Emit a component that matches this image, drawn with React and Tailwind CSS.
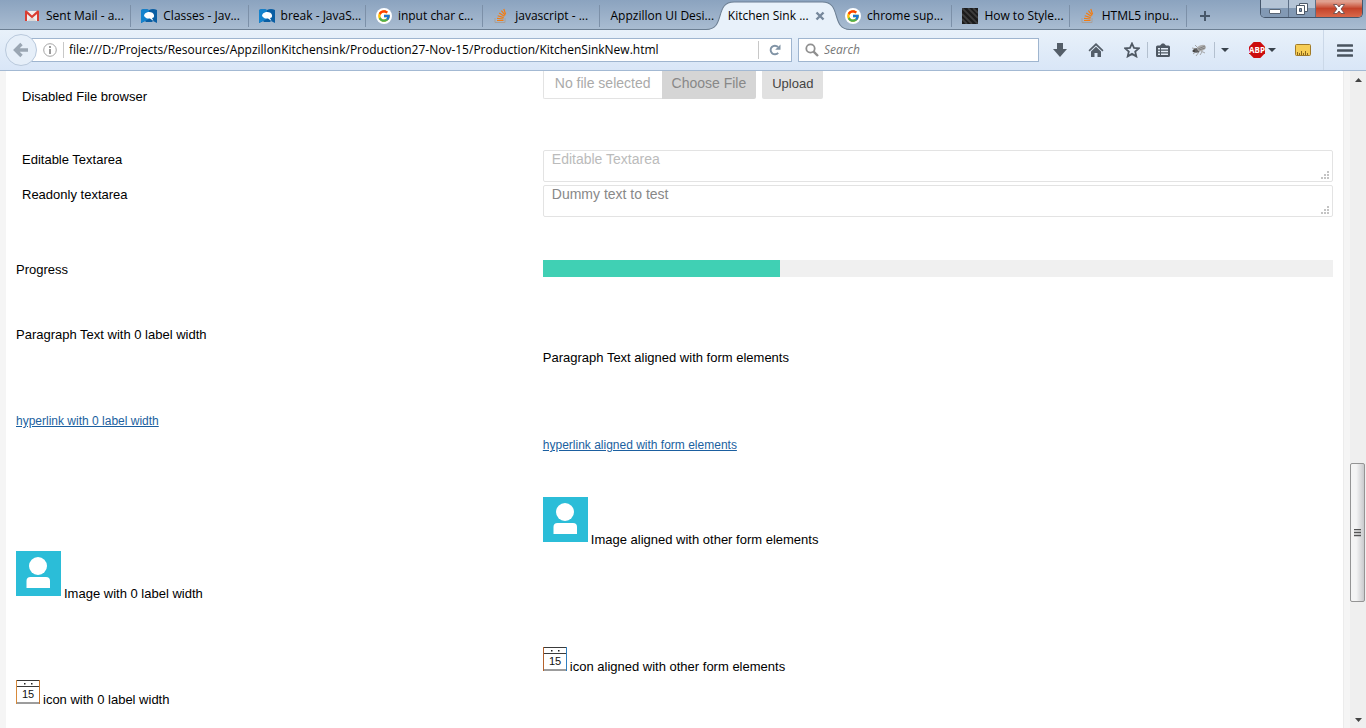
import React from "react";
import { FcGoogle } from "react-icons/fc";

const GmailIcon = () => (
  <svg viewBox="0 0 16 16" className="size-4">
    <path d="M2 3h12v10H2z" fill="#f1efee" />
    <path d="M3.500 13 8 8.500l4.500 4.500z" fill="#dcd9d8" />
    <path d="M1 3.500Q1 2 2.600 2.600L8 7.400l5.400-4.800Q15 2 15 3.500V13h-2V6L8 10.300 3 6v7H1z" fill="#d93e33" />
  </svg>
);

const MdnIcon = () => (
  <svg viewBox="0 0 16 16" className="size-4">
    <path d="M0 2q4-2 8 0 4-2 8 0v13l-4-2-1 1H5l-1-1-4 2z" fill="#0a5ea3" />
    <path d="M0 2q4-2 8 0v9l-4 2-4 2z" fill="#1583cd" />
    <path d="M3 8q0-3 4-4 5-.5 6 3 .5 3-2 3l1.500 3L9 10.500H6L4.500 9.500z" fill="#fff" />
  </svg>
);

const GoogleIcon = () => (
  <span className="flex size-4 items-center justify-center rounded-full bg-white">
    <FcGoogle size={14} />
  </span>
);

const StackIcon = () => (
  <svg viewBox="0 0 16 16" className="size-4" fill="none">
    <path d="M2 10v4.500h10V10" stroke="#a9a09a" />
    <path d="M4 12.500h6.500M4 10.300l6.500.7M4.700 7.700l6 1.900M6.200 5l5.200 3.300M8.400 2.600l3.800 4.700M10.800 1l1.800 5.200" stroke="#f27c12" strokeWidth="1.200" />
  </svg>
);

const StripesIcon = () => (
  <svg viewBox="0 0 16 16" className="size-4">
    <path d="M0 0h16v16H0z" fill="#1b1b1b" />
    <path d="M0 0l16 16M6 0l10 10M11 0l5 5M0 6l10 10M0 11l5 5" stroke="#3d3d3d" strokeWidth="1.800" />
  </svg>
);

const tabs = [
  { title: "Sent Mail - a...", Icon: GmailIcon, line: true },
  { title: "Classes - Jav...", Icon: MdnIcon, line: true },
  { title: "break - JavaS...", Icon: MdnIcon, line: true },
  { title: "input char c...", Icon: GoogleIcon, line: true },
  { title: "javascript - ...", Icon: StackIcon, line: true },
  { title: "Appzillon UI Desi..." },
  { title: "Kitchen Sink ...", active: true },
  { title: "chrome sup...", Icon: GoogleIcon, line: true },
  { title: "How to Style...", Icon: StripesIcon, line: true },
  { title: "HTML5 inpu...", Icon: StackIcon, line: true },
];

function Tab({ title, Icon, line, active }) {
  return (
    <div className={"relative flex h-full min-w-0 flex-1 items-center pt-0.5 " + (active ? "z-10" : "")}>
      {active && (
        <svg
          viewBox="0 0 144 30"
          preserveAspectRatio="none"
          className="absolute top-0 -left-3 h-[30px] w-[calc(100%+27px)]"
        >
          <path d="M0 30V29.500C20 29.500 8 2 28 2H116C136 2 124 29.500 144 29.500V30z" fill="#e8f1fa" />
          <path d="M0 29.500C20 29.500 8 2 28 2H116C136 2 124 29.500 144 29.500" fill="none" stroke="#6c7f93" />
        </svg>
      )}
      <button type="button" className="relative flex min-w-0 flex-1 items-center gap-1.5 pl-2.5 whitespace-nowrap">
        {Icon && <Icon />}
        <span>{title}</span>
      </button>
      {active && (
        <button type="button" aria-label="Close tab" className="relative mr-2.5">
          <svg viewBox="0 0 10 10" className="size-2.5">
            <path d="M1.500 1.500l7 7M8.500 1.500l-7 7" stroke="#76889b" strokeWidth="2.400" />
          </svg>
        </button>
      )}
      {line && <span className="absolute top-[5px] right-0 h-[22px] w-px bg-[#7c90a8]" />}
    </div>
  );
}

function WindowControls() {
  return (
    <div className="mr-[3px] flex h-[18px] overflow-hidden rounded-b-[5px] border border-t-0 border-[#45566b]">
      <button type="button" aria-label="Minimize" className="flex w-7 items-end justify-center border-r border-[#5d6f86] bg-linear-to-b from-[#b4c4d6] from-45% to-[#8299b4] to-50% pb-[3px]">
        <span className="h-[5px] w-3 rounded-[1px] border border-[#5a6675] bg-white" />
      </button>
      <button type="button" aria-label="Restore" className="flex w-[27px] items-center justify-center border-r border-[#5d6f86] bg-linear-to-b from-[#b4c4d6] from-45% to-[#8299b4] to-50%">
        <svg viewBox="0 0 12 12" className="size-3" fill="#fff" stroke="#4d5a6a">
          <path d="M3.500.5h8v8h-8z" />
          <path d="M.5 2.500h8v9h-8z" />
          <path d="M3.500 5.500h2v3h-2z" fill="#8299b4" />
        </svg>
      </button>
      <button type="button" aria-label="Close" className="flex w-[46px] items-center justify-center bg-linear-to-b from-[#e0a08f] from-10% via-[#c4432a] via-50% to-[#d9684a]">
        <svg viewBox="0 0 12 10" className="h-2.5 w-3">
          <path d="M.5.5h3.500L6 3 8 .5h3.500L8 5l3.500 4.500H8L6 7 4 9.500H.5L4 5z" fill="#fff" stroke="#5a4548" strokeWidth=".8" />
        </svg>
      </button>
    </div>
  );
}

function TabStrip() {
  return (
    <div className="flex h-[30px] border-b border-[#6c7f93] bg-linear-to-b from-[#8ba3bf] to-[#a9bcd1] pl-3.5">
      <div className="flex h-[30px] min-w-0 flex-1">
        {tabs.map((t, i) => (
          <Tab key={i} {...t} />
        ))}
      </div>
      <div className="flex w-[179px] items-start justify-between">
        <button type="button" aria-label="New tab" className="ml-[13px] mt-[11px]">
          <svg viewBox="0 0 10 10" className="size-2.5">
            <path d="M5 0v10M0 5h10" stroke="#48586a" strokeWidth="2" />
          </svg>
        </button>
        <WindowControls />
      </div>
    </div>
  );
}

const Caret = () => (
  <svg viewBox="0 0 8 4" className="h-1 w-2">
    <path d="M0 0h8L4 4z" fill="#39434d" />
  </svg>
);

function Toolbar() {
  return (
    <div className="flex h-[41px] items-center border-b border-[#a3b9d3] bg-linear-to-b from-[#e8f1fa] to-[#d9e6f7] pl-[5px]">
      <button type="button" aria-label="Back" className="relative z-10 flex size-8 shrink-0 items-center justify-center rounded-full border border-[#b9c9dc] bg-[#e6eff9]">
        <svg viewBox="0 0 16 16" className="size-4">
          <path d="M8.500 2 2.500 8l6 6M3 8h12" fill="none" stroke="#9aa6b3" strokeWidth="3.400" />
        </svg>
      </button>
      <div className="-ml-2 flex h-6 min-w-0 flex-1 items-center border border-[#9fb5cf] bg-white pl-[13px]">
        <svg viewBox="0 0 14 14" className="size-3.5 shrink-0">
          <circle cx="7" cy="7" r="6.300" fill="none" stroke="#a5a5a5" />
          <path d="M6 3h2v2H6zM6 6h2v5H6z" fill="#9a9a9a" />
        </svg>
        <span className="ml-1.5 h-4 w-px bg-[#c8c8c8]" />
        <input
          aria-label="Address"
          className="ml-[5px] min-w-0 flex-1 bg-transparent outline-none"
          defaultValue="file:///D:/Projects/Resources/AppzillonKitchensink/Production27-Nov-15/Production/KitchenSinkNew.html"
        />
        <button type="button" aria-label="Reload" className="flex h-[18px] w-[33px] items-center justify-center border-l border-[#c8c8c8]">
          <svg viewBox="0 0 12 12" className="size-3">
            <path d="M9.200 8.800A4.300 4.300 0 1 1 9 3" fill="none" stroke="#8093a5" strokeWidth="1.900" />
            <path d="M11.500.5v5.300H6.200z" fill="#8093a5" />
          </svg>
        </button>
      </div>
      <div className="ml-1.5 flex h-6 w-[241px] items-center border border-[#9fb5cf] bg-white pl-1.5">
        <svg viewBox="0 0 14 14" className="size-3.5 shrink-0" fill="none" stroke="#8f8f8f">
          <circle cx="5.500" cy="5.500" r="4.200" strokeWidth="1.800" />
          <path d="M8.600 8.600l4.400 4.400" strokeWidth="2.400" />
        </svg>
        <input aria-label="Search" placeholder="Search" className="ml-[5px] min-w-0 flex-1 bg-transparent italic outline-none placeholder:text-[#777]" />
      </div>
      <div className="flex h-full w-[327px] items-center">
        <button type="button" aria-label="Downloads" className="ml-3.5">
          <svg viewBox="0 0 14 14" className="size-3.5">
            <path d="M4 0h6v6h4l-7 8L0 6h4z" fill="#545e69" />
          </svg>
        </button>
        <button type="button" aria-label="Home" className="ml-[21px]">
          <svg viewBox="0 0 16 14" className="h-3.5 w-4" fill="#545e69">
            <path d="M8 0l7.500 7.200-1.100 1.200L8 2.500 1.600 8.400.5 7.200z" />
            <path d="M8 3.800l5 4.600V14H9.500v-4h-3v4H3V8.400z" />
          </svg>
        </button>
        <button type="button" aria-label="Bookmark" className="ml-5">
          <svg viewBox="0 0 16 16" className="size-4">
            <path d="M8 1.500l2 4.400 4.800.5-3.600 3.200 1.100 4.800L8 11.900l-4.300 2.500 1.100-4.800L1.200 6.400 6 5.900z" fill="none" stroke="#4e5863" strokeWidth="1.800" />
          </svg>
        </button>
        <span className="ml-[7px] h-4 w-px bg-[#b3c0cf]" />
        <button type="button" aria-label="Bookmarks list" className="ml-2">
          <svg viewBox="0 0 14 15" className="h-[15px] w-3.5">
            <path d="M0 4q0-1.500 1.500-1.500H4L6 .5h2l2 2h2.500Q14 2.500 14 4v8.500q0 1.500-1.500 1.500h-11Q0 14 0 12.500z" fill="#4e5863" />
            <path d="M2 5h2v1.500H2zM5 5h7v1.500H5zM2 7.750h2v1.500H2zM5 7.750h7v1.500H5zM2 10.500h2V12H2zM5 10.500h7V12H5z" fill="#e4edf8" />
          </svg>
        </button>
        <button type="button" aria-label="Firebug" className="ml-[21px]">
          <svg viewBox="0 0 16 14" className="h-3.5 w-4">
            <path d="M1 5l5 1M2 11l4-3M5 13l3-4M9 12l2-3M4 2l4 4M14 10l-4-2" stroke="#9d9d9d" strokeWidth=".9" />
            <ellipse cx="5.500" cy="7.500" rx="3.200" ry="2.200" fill="#5d5d5d" />
            <ellipse cx="10.500" cy="5" rx="4.500" ry="2.800" fill="#adadad" transform="rotate(-20 10.500 5)" />
            <path d="M7 6l7-3M8 7l6-2" stroke="#707070" strokeWidth=".7" />
            <circle cx="2.800" cy="8" r="1.300" fill="#444" />
          </svg>
        </button>
        <span className="ml-[7px] h-4 w-px bg-[#b3c0cf]" />
        <button type="button" aria-label="Firebug options" className="ml-1.5"><Caret /></button>
        <button type="button" aria-label="Adblock Plus" className="ml-5 flex items-center gap-[3px]">
          <svg viewBox="0 0 16 16" className="size-4">
            <path d="M4.700 0h6.600L16 4.700v6.600L11.300 16H4.700L0 11.300V4.700z" fill="#cc0d0d" />
            <text x="8" y="11" textAnchor="middle" fontSize="8" fontWeight="700" fill="#fff" fontFamily="Open Sans, sans-serif">ABP</text>
          </svg>
          <Caret />
        </button>
        <button type="button" aria-label="Measure" className="ml-[19px]">
          <svg viewBox="0 0 16 12" className="h-3 w-4">
            <rect x=".5" y=".5" width="15" height="11" rx="1" fill="#f6cd55" stroke="#a07a28" />
            <path d="M2.500 11V8M4.500 11V9M6.500 11V7M8.500 11V9M10.500 11V7M12.500 11V9" stroke="#8a671d" />
          </svg>
        </button>
        <span className="ml-3 h-full w-px bg-[#cbd8e8]" />
        <button type="button" aria-label="Menu" className="ml-[13px]">
          <svg viewBox="0 0 16 13" className="h-[13px] w-4">
            <path d="M1 1.500h14M1 6.500h14M1 11.500h14" stroke="#4a545f" strokeWidth="2.600" strokeLinecap="round" />
          </svg>
        </button>
      </div>
    </div>
  );
}

function Row({ className = "", children }) {
  return <div className={"grid grid-cols-[2fr_3fr] items-start " + className}>{children}</div>;
}

const areaClass =
  "block h-8 w-full resize-none overflow-hidden rounded-xs border border-[#e3e3e3] bg-white px-2 text-sm leading-4 outline-none";

function Area({ id, ...props }) {
  return (
    <div className="relative">
      <textarea id={id} className={areaClass + " text-[#888] placeholder:text-[#bbb]"} {...props} />
      <svg viewBox="0 0 8 8" className="pointer-events-none absolute right-1 bottom-[3px] size-2">
        <path d="M6 0h2v2H6zM3 3h2v2H3zM6 3h2v2H6zM0 6h2v2H0zM3 6h2v2H3zM6 6h2v2H6z" fill="#c4c4c4" />
      </svg>
    </div>
  );
}

const Avatar = () => (
  <svg viewBox="0 0 45 45" className="mb-2 size-[45px]" role="img" aria-label="User">
    <path d="M0 0h45v45H0z" fill="#2bbdd8" />
    <circle cx="22" cy="15" r="9" fill="#fff" />
    <path d="M10.500 37v-7q0-4 4-4h15.500q4 0 4 4v7z" fill="#fff" />
  </svg>
);

function CalendarIcon({ left, right }) {
  return (
    <svg viewBox="0 0 24 24" className="mb-1.5 size-6" role="img" aria-label="Calendar">
      <path d="M0 0h24v24H0z" fill="#fff" />
      <path d="M0 .5h24M0 6.500h24M0 23h24" stroke="#3a3a3a" />
      <path d="M.5 0v24" stroke={left} />
      <path d="M23.500 0v24" stroke={right} />
      <path d="M8 3h1.500v1.500H8zM15 3h1.500v1.500H15z" fill="#222" />
      <text x="12" y="17.500" textAnchor="middle" fontSize="11" fill="#111" fontFamily="Liberation Sans, sans-serif">15</text>
    </svg>
  );
}

function Scrollbar() {
  return (
    <div className="flex w-4 flex-col items-center bg-[#efefef]" aria-hidden="true">
      <div className="flex h-[17px] items-center">
        <svg viewBox="0 0 7 4" className="h-1 w-[7px]"><path d="M3.500 0L7 4H0z" fill="#444" /></svg>
      </div>
      <div className="grow-[375]" />
      <div className="mr-px flex h-[139px] w-[15px] items-center justify-center rounded-[2px] border border-[#949494] bg-linear-to-r from-[#f4f4f4] from-40% to-[#c9cacd]">
        <svg viewBox="0 0 7 8" className="h-2 w-[7px]"><path d="M0 .5h7M0 3.500h7M0 6.500h7" stroke="#555" strokeWidth="1.500" /></svg>
      </div>
      <div className="grow-[109]" />
      <div className="flex h-[17px] items-center">
        <svg viewBox="0 0 7 4" className="h-1 w-[7px]"><path d="M0 0h7L3.500 4z" fill="#444" /></svg>
      </div>
    </div>
  );
}

export default function App() {
  return (
    <div className="flex h-screen flex-col overflow-hidden bg-white text-black">
      <header className="shrink-0 font-['Open_Sans',sans-serif] text-xs">
        <TabStrip />
        <Toolbar />
      </header>
      <div className="flex min-h-0 flex-1 bg-[#f5f5f5] pl-1.5">
        <main className="mr-1.5 min-w-0 flex-1 overflow-hidden border-r border-[#ececec] bg-white px-2.5 font-['Liberation_Sans',Arial,sans-serif] text-[13px] leading-5">
          <Row>
            <span className="pt-4 pl-1.5">Disabled File browser</span>
            <div className="flex">
              <div className="flex h-7 text-sm">
                <span className="flex items-center rounded-bl-xs border border-t-0 border-r-0 border-[#e3e3e3] px-[11px] pb-1 text-[#aaa]">
                  No file selected
                </span>
                <button type="button" disabled className="rounded-br-xs bg-[#d5d5d5] px-2.5 pb-1 text-[#888]">
                  Choose File
                </button>
              </div>
              <button type="button" className="ml-1.5 h-7 rounded-b-xs bg-[#e1e1e1] px-2.5 pb-0.5 text-[#444]">
                Upload
              </button>
            </div>
          </Row>

          <Row className="mt-[43px]">
            <label htmlFor="editable" className="pl-1.5">Editable Textarea</label>
            <Area id="editable" placeholder="Editable Textarea" />
          </Row>
          <Row className="mt-[3px]">
            <label htmlFor="readonly" className="pl-1.5">Readonly textarea</label>
            <Area id="readonly" readOnly defaultValue="Dummy text to test" />
          </Row>

          <Row className="mt-[43px]">
            <span id="progress-label">Progress</span>
            <div role="progressbar" aria-labelledby="progress-label" aria-valuenow={30} className="h-[17px] bg-[#f0f0f0]">
              <div className="h-full w-[30%] bg-[#40d0b4]" />
            </div>
          </Row>

          <div className="mt-[43px] leading-[23px]">
            <p>Paragraph Text with 0 label width</p>
            <p className="ml-[40%]">Paragraph Text aligned with form elements</p>
          </div>

          <div className="mt-10 text-xs leading-6 text-[#1b5fa0] underline">
            <p><a href="#link">hyperlink with 0 label width</a></p>
            <p className="ml-[40%]"><a href="#aligned">hyperlink aligned with form elements</a></p>
          </div>

          <div className="mt-10 ml-[40%] flex items-end gap-[3px]">
            <Avatar />
            <span>Image aligned with other form elements</span>
          </div>
          <div className="mt-px flex items-end gap-[3px]">
            <Avatar />
            <span>Image with 0 label width</span>
          </div>

          <div className="mt-[43px] ml-[40%] flex items-end gap-[3px]">
            <CalendarIcon left="#b5622c" right="#2f7fc0" />
            <span>icon aligned with other form elements</span>
          </div>
          <div className="mt-[3px] flex items-end gap-[3px]">
            <CalendarIcon left="#d88a3a" right="#c9752a" />
            <span>icon with 0 label width</span>
          </div>
        </main>
        <Scrollbar />
      </div>
    </div>
  );
}
